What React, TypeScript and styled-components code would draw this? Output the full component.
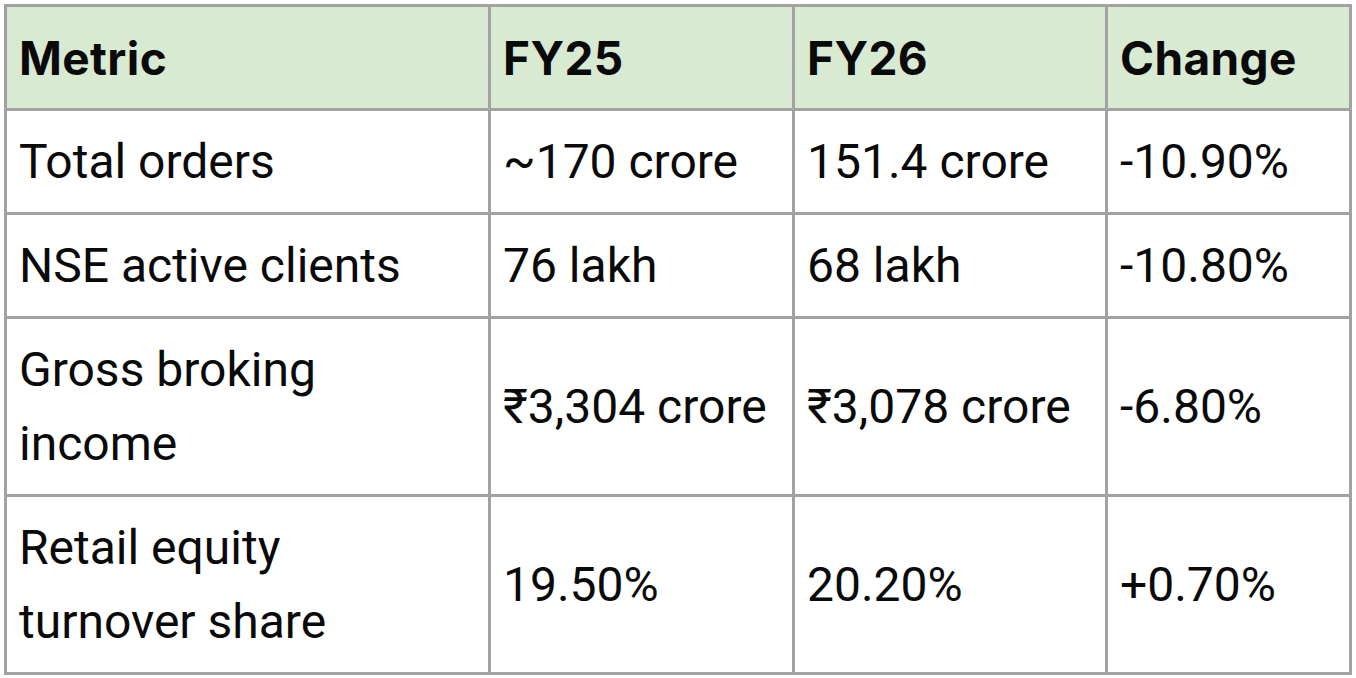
import React from "react";
import styled, { createGlobalStyle } from "styled-components";

const Global = createGlobalStyle`
  html, body {
    margin: 0;
    padding: 0;
    background: #ffffff;
  }
  body {
    font-family: Roboto, "Noto Sans", "DejaVu Sans", sans-serif;
    color: #0d0d0d;
  }
`;

const Page = styled.div`
  padding: 4px;
`;

const Table = styled.table`
  border-collapse: collapse;
  table-layout: fixed;
  width: 1348px;
  border: 3px solid #a2a2a2;
`;

const HeadRow = styled.tr`
  background: #d9ead3;
`;

const HeadCell = styled.th`
  border: 3px solid #a2a2a2;
  padding: 13.5px 12px;
  text-align: left;
  vertical-align: middle;
  font-family: Inter, Roboto, sans-serif;
  font-weight: 700;
  font-size: 46px;
  line-height: 74px;
  color: #0a0a0a;
  letter-spacing: 0.4px;
`;

const Cell = styled.td`
  border: 3px solid #a2a2a2;
  padding: 13.5px 20px 13.5px 12px;
  text-align: left;
  vertical-align: middle;
  font-size: 48px;
  line-height: 74px;
  font-weight: 400;
  color: #0a0a0a;
  white-space: normal;
`;

type Row = [string, string, string, string];

const rows: Row[] = [
  ["Total orders", "~170 crore", "151.4 crore", "-10.90%"],
  ["NSE active clients", "76 lakh", "68 lakh", "-10.80%"],
  ["Gross broking income", "₹3,304 crore", "₹3,078 crore", "-6.80%"],
  ["Retail equity turnover share", "19.50%", "20.20%", "+0.70%"],
];

const widths = [484, 304, 313, 244];

export default function App() {
  return (
    <>
      <Global />
      <Page>
        <Table>
          <colgroup>
            {widths.map((w, i) => (
              <col key={i} style={{ width: w }} />
            ))}
          </colgroup>
          <thead>
            <HeadRow>
              <HeadCell>Metric</HeadCell>
              <HeadCell>FY25</HeadCell>
              <HeadCell>FY26</HeadCell>
              <HeadCell>Change</HeadCell>
            </HeadRow>
          </thead>
          <tbody>
            {rows.map((r, i) => (
              <tr key={i}>
                {r.map((c, j) => (
                  <Cell key={j}>{c}</Cell>
                ))}
              </tr>
            ))}
          </tbody>
        </Table>
      </Page>
    </>
  );
}
